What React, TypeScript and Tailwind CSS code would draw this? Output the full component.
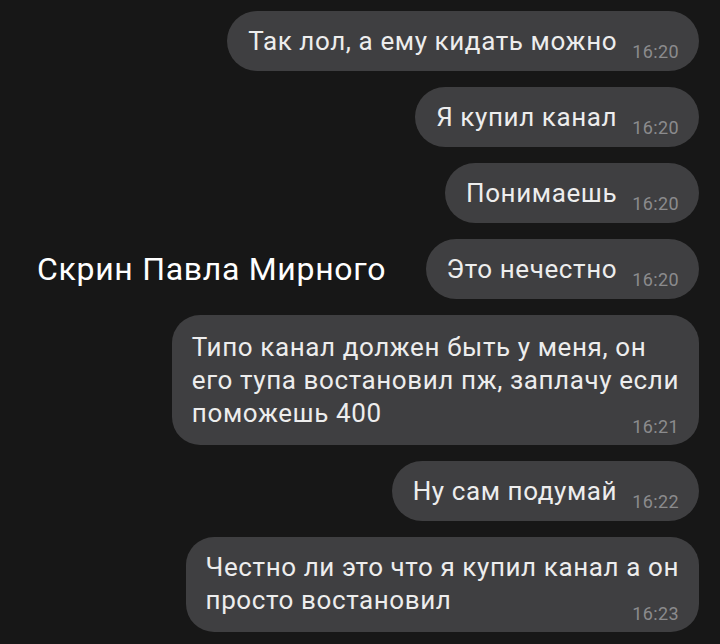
import React from "react";

const font = { fontFamily: "Roboto, 'Noto Sans', sans-serif" };

function Single({ text, time }: { text: string; time: string }) {
  return (
    <div className="flex h-[60px] items-center rounded-[30px] bg-[#3f3f41] pl-[21px] pr-[20px]">
      <span className="whitespace-nowrap text-[26px] leading-[33px] tracking-[0.6px] text-[#ededed]">{text}</span>
      <span className="ml-[15px] translate-y-[11px] whitespace-nowrap text-[18px] leading-[20px] tracking-[0.4px] text-[#8b8b8d]">
        {time}
      </span>
    </div>
  );
}

function Multi({ lines, time, pt }: { lines: string[]; time: string; pt: string }) {
  return (
    <div className={`flex flex-col rounded-[28px] bg-[#3f3f41] pl-[20px] pr-[20px] pb-[8px] ${pt}`}>
      <div className="whitespace-nowrap text-[26px] leading-[33px] tracking-[0.6px] text-[#ededed]">
        {lines.map((l, i) => (
          <div key={i}>{l}</div>
        ))}
      </div>
      <div className="-mt-[13px] self-end text-[18px] leading-[20px] tracking-[0.4px] text-[#8b8b8d]">{time}</div>
    </div>
  );
}

export default function App() {
  return (
    <div className="h-[644px] w-[720px] overflow-hidden bg-[#171717]" style={font}>
      <div className="flex flex-col items-end gap-[16px] pr-[21px] pt-[11px]">
        <Single text="Так лол, а ему кидать можно" time="16:20" />
        <Single text="Я купил канал" time="16:20" />
        <Single text="Понимаешь" time="16:20" />
        <div className="flex w-full items-center justify-between pl-[37px]">
          <span className="whitespace-nowrap text-[32px] tracking-[0.7px] text-white">Скрин Павла Мирного</span>
          <Single text="Это нечестно" time="16:20" />
        </div>
        <Multi
          pt="pt-[16px]"
          lines={[
            "Типо канал должен быть у меня, он",
            "его тупа востановил пж, заплачу если",
            "поможешь 400",
          ]}
          time="16:21"
        />
        <Single text="Ну сам подумай" time="16:22" />
        <Multi
          pt="pt-[14px]"
          lines={["Честно ли это что я купил канал а он", "просто востановил"]}
          time="16:23"
        />
      </div>
    </div>
  );
}
